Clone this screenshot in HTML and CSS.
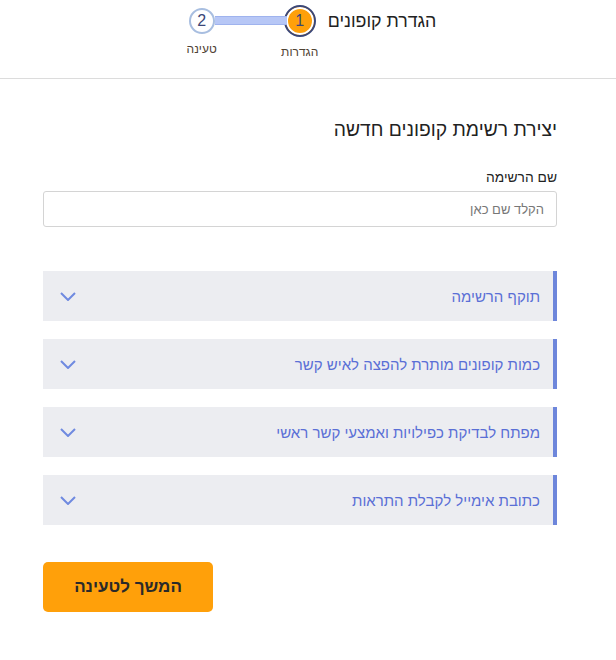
FILE: index.html
```html
<!DOCTYPE html>
<html lang="he" dir="rtl">
<head>
  <meta charset="UTF-8">
  <meta name="viewport" content="width=device-width, initial-scale=1.0">
  <title>הגדרת קופונים</title>
  <link rel="stylesheet" href="styles.css">
</head>
<body>
  <header class="top-bar">
    <h1 class="top-title">הגדרת קופונים</h1>
    <div class="stepper">
      <div class="step">
        <span class="step-circle current">1</span>
        <span class="step-label">הגדרות</span>
      </div>
      <span class="step-line"></span>
      <div class="step">
        <span class="step-circle next">2</span>
        <span class="step-label">טעינה</span>
      </div>
    </div>
  </header>

  <main class="content">
    <h2 class="form-title">יצירת רשימת קופונים חדשה</h2>

    <label class="field-label" for="listName">שם הרשימה</label>
    <input class="field-input" id="listName" type="text" placeholder="הקלד שם כאן">

    <div class="sections">
      <button class="section-row">
        <span>תוקף הרשימה</span>
        <svg class="chevron" viewBox="0 0 16 9" width="16" height="9"><path d="M1 1l7 7 7-7"/></svg>
      </button>
      <button class="section-row">
        <span>כמות קופונים מותרת להפצה לאיש קשר</span>
        <svg class="chevron" viewBox="0 0 16 9" width="16" height="9"><path d="M1 1l7 7 7-7"/></svg>
      </button>
      <button class="section-row">
        <span>מפתח לבדיקת כפילויות ואמצעי קשר ראשי</span>
        <svg class="chevron" viewBox="0 0 16 9" width="16" height="9"><path d="M1 1l7 7 7-7"/></svg>
      </button>
      <button class="section-row">
        <span>כתובת אימייל לקבלת התראות</span>
        <svg class="chevron" viewBox="0 0 16 9" width="16" height="9"><path d="M1 1l7 7 7-7"/></svg>
      </button>
    </div>

    <div class="actions">
      <button class="next-button">המשך לטעינה</button>
    </div>
  </main>
</body>
</html>
```

FILE: styles.css
```css
/* עמוד הגדרת קופונים */
body {
  margin: 0;
  padding: 0;
  font-family: "Liberation Sans", Arial, sans-serif;
  color: #222;
  background: #fff;
}

.top-bar {
  height: 78px;
  border-bottom: 1px solid #dcdcdc;
  display: flex;
  justify-content: center;
  align-items: flex-start;
  padding-left: 6px;
}
.top-title {
  margin: 11px 0 0 12px;
  font-size: 17.8px;
  font-weight: normal;
  line-height: 20px;
  color: #222;
}
.stepper {
  display: flex;
  align-items: flex-start;
}
.step {
  display: flex;
  flex-direction: column;
  align-items: center;
  width: 32px;
}
.step-circle {
  box-sizing: border-box;
  border-radius: 50%;
  display: flex;
  align-items: center;
  justify-content: center;
  font-size: 16px;
  color: #3b4778;
}
.step-circle.current {
  width: 32px;
  height: 32px;
  margin-top: 5px;
  background: #ffa00a;
  border: 2px solid #3b4778;
  box-shadow: inset 0 0 0 2px #fff;
}
.step-circle.next {
  width: 26px;
  height: 26px;
  margin-top: 8px;
  background: #fff;
  border: 2px solid #a8bee0;
}
.step-label {
  margin-top: 8px;
  font-size: 12px;
  color: #4f4234;
  white-space: nowrap;
}
.step-line {
  width: 72px;
  height: 9px;
  margin: 16px -3px 0;
  box-sizing: border-box;
  background: #b7c7f6;
  border-top: 1px solid #9fb3ee;
  border-bottom: 1px solid #9fb3ee;
}

.content {
  padding: 39px 59px 40px 43px;
  display: flex;
  flex-direction: column;
}
.form-title {
  margin: 0;
  font-size: 19.3px;
  font-weight: normal;
  line-height: 24px;
  color: #222;
}
.field-label {
  margin-top: 28px;
  font-size: 13.8px;
  line-height: 16px;
  color: #222;
}
.field-input {
  margin-top: 5px;
  height: 36px;
  box-sizing: border-box;
  border: 1px solid #d4d4d4;
  border-radius: 3px;
  padding: 0 12px;
  font-family: inherit;
  font-size: 13px;
  color: #222;
}
.field-input::placeholder {
  color: #777;
}

.sections {
  margin-top: 44px;
  display: flex;
  flex-direction: column;
  gap: 18px;
}
.section-row {
  height: 50px;
  display: flex;
  align-items: center;
  justify-content: space-between;
  padding: 0 13px 0 17px;
  background: #ecedf1;
  border: none;
  border-right: 4px solid #6d86db;
  font-family: inherit;
  font-size: 15px;
  color: #5a6fd6;
  text-align: right;
  cursor: pointer;
}
.chevron {
  fill: none;
  stroke: #6f8ae0;
  stroke-width: 2;
}

.actions {
  margin-top: 37px;
  display: flex;
  justify-content: flex-end;
}
.next-button {
  width: 170px;
  height: 50px;
  border: none;
  border-radius: 5px;
  background: #ffa00a;
  font-family: inherit;
  font-size: 17px;
  font-weight: bold;
  color: #2a2a2a;
  cursor: pointer;
}
```
